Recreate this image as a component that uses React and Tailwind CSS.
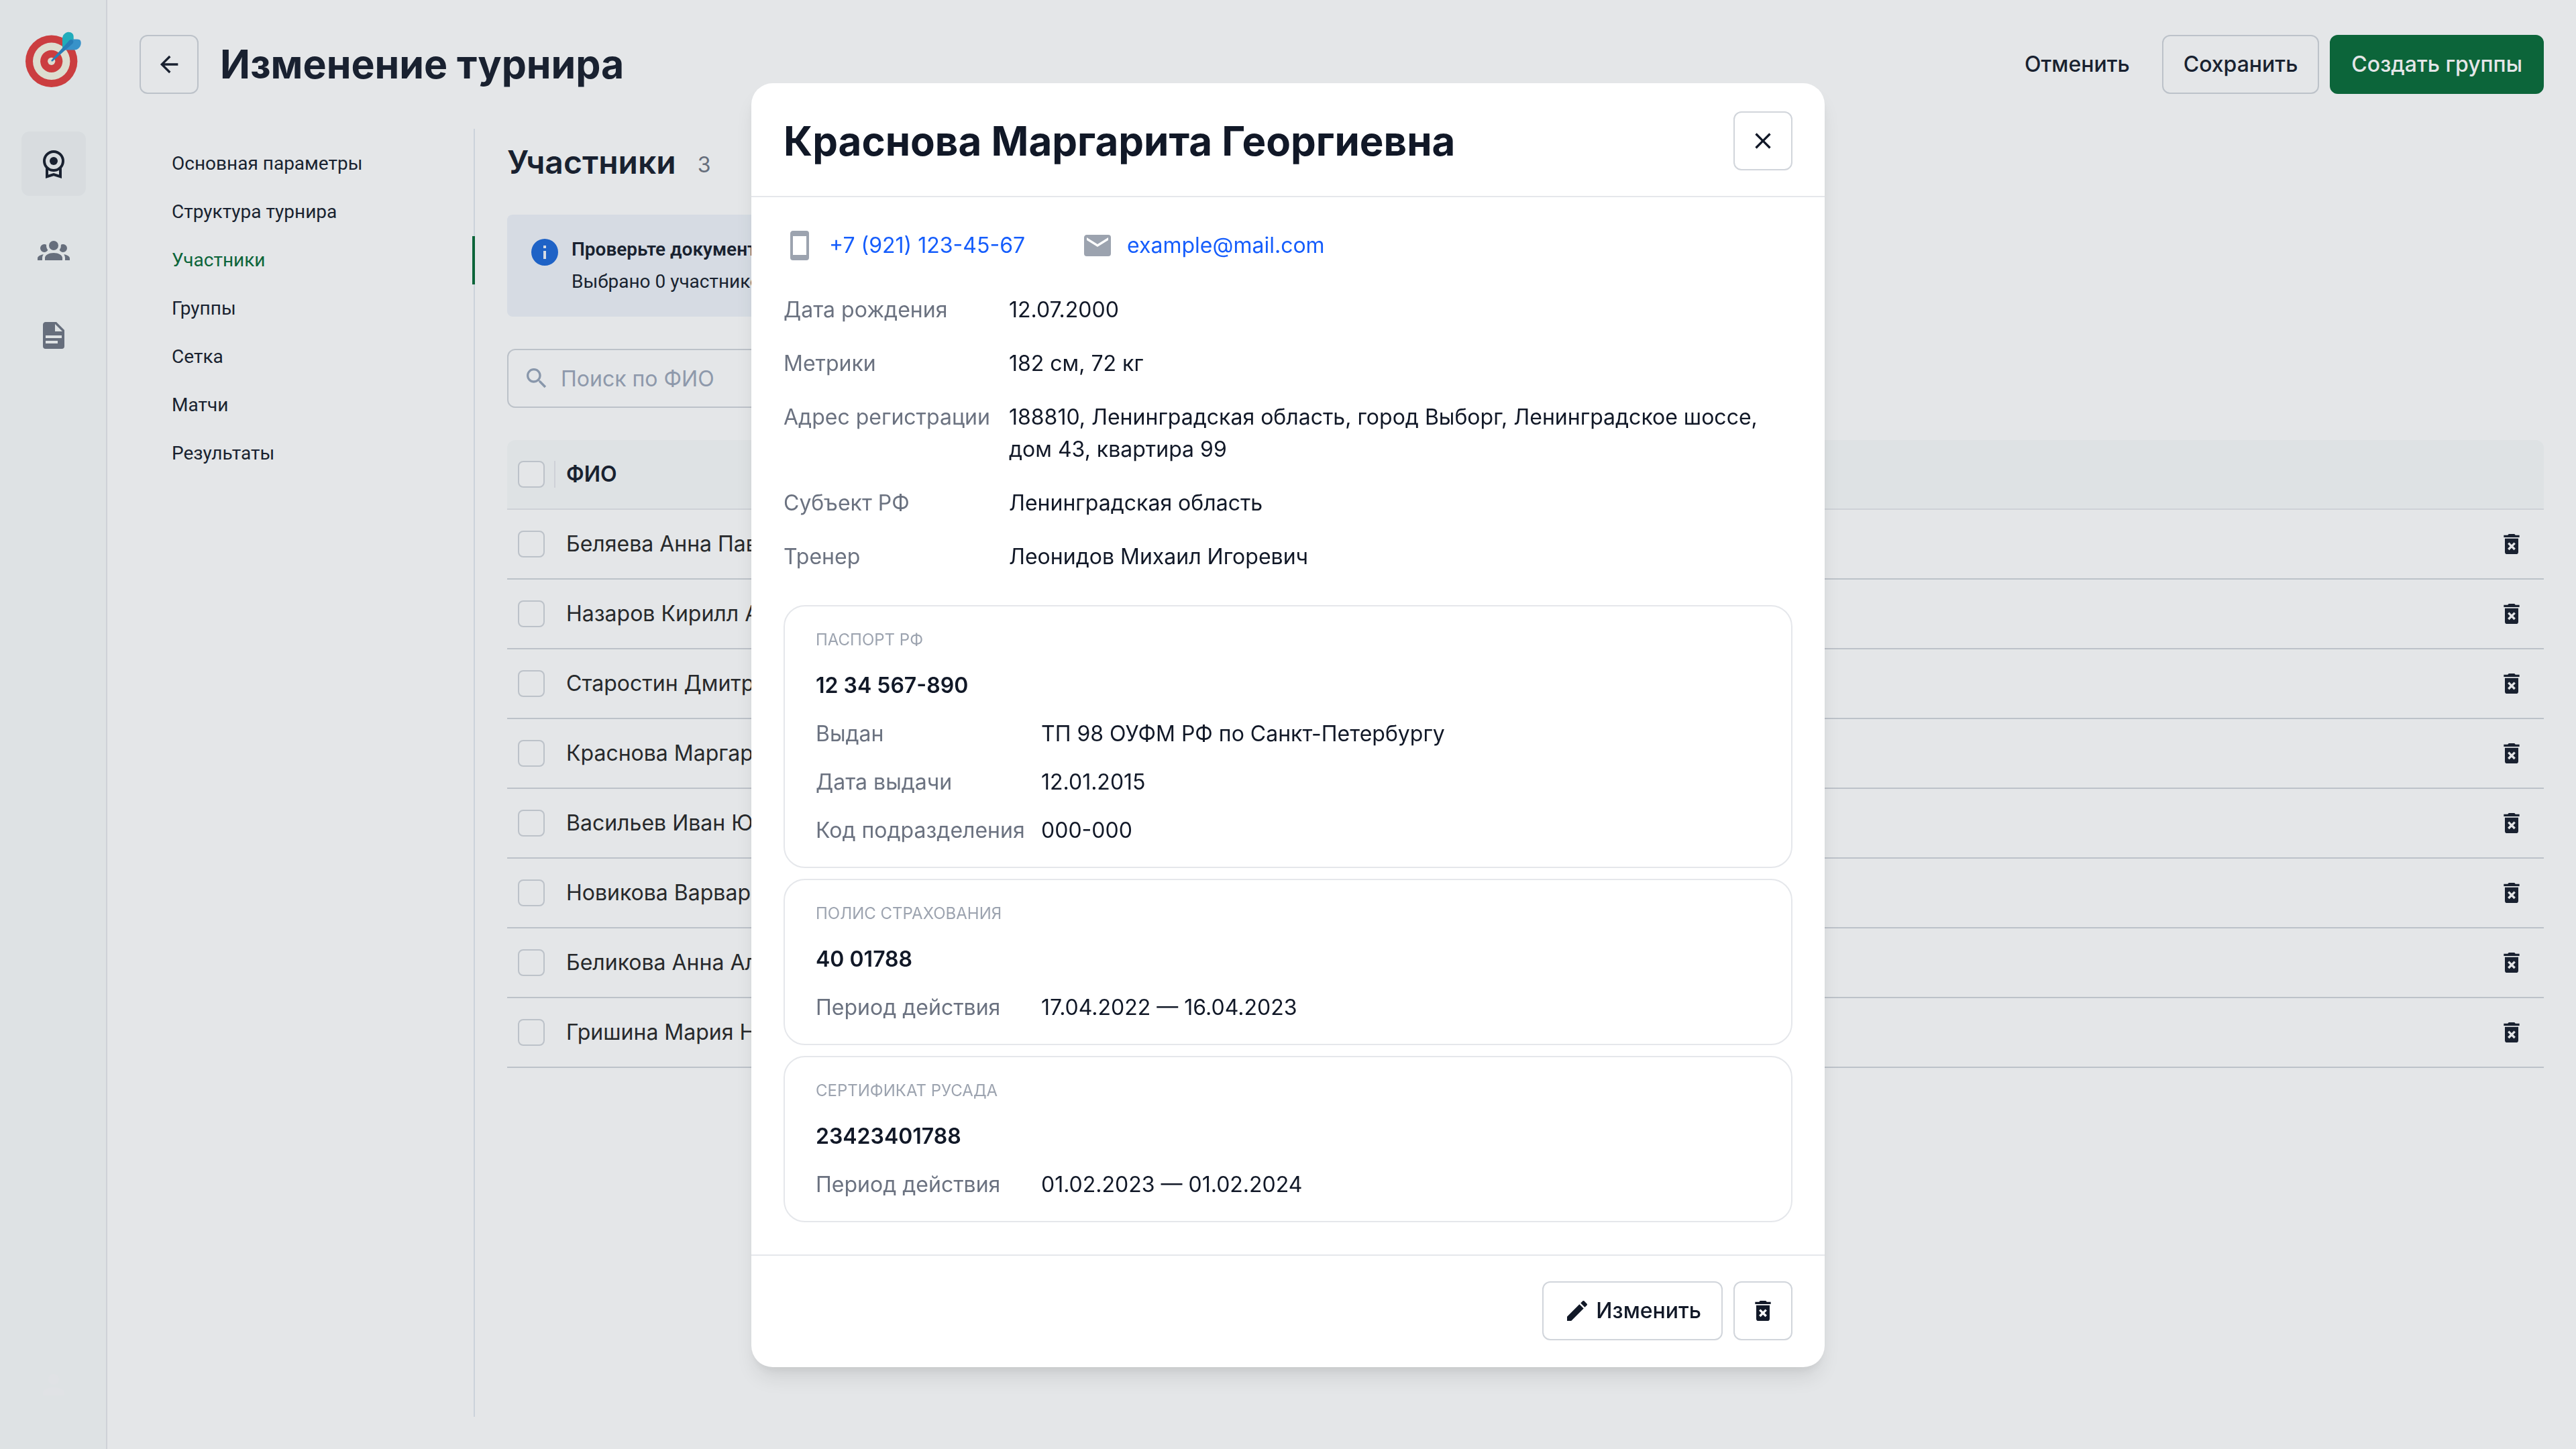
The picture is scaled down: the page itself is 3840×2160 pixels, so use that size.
import React from "react";

const ICONS = {
  group:
    "M12 5.5A3.5 3.5 0 0 1 15.5 9a3.5 3.5 0 0 1-3.5 3.5A3.5 3.5 0 0 1 8.5 9 3.5 3.5 0 0 1 12 5.5M5 8c.56 0 1.08.15 1.53.42-.15 1.43.27 2.85 1.13 3.96C7.16 13.34 6.16 14 5 14a3 3 0 0 1-3-3 3 3 0 0 1 3-3m14 0a3 3 0 0 1 3 3 3 3 0 0 1-3 3c-1.16 0-2.16-.66-2.66-1.62a5.536 5.536 0 0 0 1.13-3.96c.45-.27.97-.42 1.53-.42M5.5 18.25c0-2.07 2.91-3.75 6.5-3.75s6.5 1.68 6.5 3.75V20h-13zM0 20v-1.5c0-1.39 1.89-2.56 4.45-2.9-.59.68-.95 1.62-.95 2.65V20zm24 0h-3.5v-1.75c0-1.03-.36-1.97-.95-2.65 2.56.34 4.45 1.51 4.45 2.9z",
  file: "M13 9h5.5L13 3.5zM6 2h8l6 6v12a2 2 0 0 1-2 2H6a2 2 0 0 1-2-2V4c0-1.11.89-2 2-2m9 16v-2H6v2zm3-4v-2H6v2z",
  account:
    "M12 4a4 4 0 0 1 4 4 4 4 0 0 1-4 4 4 4 0 0 1-4-4 4 4 0 0 1 4-4m0 10c4.42 0 8 1.79 8 4v2H4v-2c0-2.21 3.58-4 8-4",
  back: "M20 11v2H8l5.500 5.500-1.420 1.420L4.160 12l7.920-7.920L13.500 5.500 8 11z",
  close:
    "M19 6.41 17.59 5 12 10.59 6.41 5 5 6.41 10.59 12 5 17.59 6.41 19 12 13.41 17.59 19 19 17.59 13.41 12z",
  info: "M13 9h-2V7h2m0 10h-2v-6h2m-1-9A10 10 0 0 0 2 12a10 10 0 0 0 10 10 10 10 0 0 0 10-10A10 10 0 0 0 12 2",
  search:
    "M9.5 3A6.5 6.5 0 0 1 16 9.5c0 1.61-.59 3.09-1.56 4.23l.27.27h.79l5 5-1.5 1.5-5-5v-.79l-.27-.27A6.516 6.516 0 0 1 9.5 16 6.5 6.5 0 0 1 3 9.5 6.5 6.5 0 0 1 9.5 3m0 2C7 5 5 7 5 9.5S7 14 9.5 14 14 12 14 9.5 12 5 9.5 5",
  trash:
    "M6 19a2 2 0 0 0 2 2h8a2 2 0 0 0 2-2V7H6zm2.46-7.12 1.41-1.41L12 12.59l2.12-2.12 1.41 1.41L13.41 14l2.12 2.12-1.41 1.41L12 15.41l-2.12 2.12-1.41-1.41L10.59 14zM15.5 4l-1-1h-5l-1 1H5v2h14V4z",
  pencil:
    "M20.71 7.04c.39-.39.39-1.04 0-1.41l-2.34-2.34c-.37-.39-1.02-.39-1.41 0l-1.84 1.83 3.75 3.75M3 17.25V21h3.75L17.81 9.93l-3.75-3.75z",
  phone:
    "M17 19H7V5h10m0-4H7c-1.11 0-2 .89-2 2v18a2 2 0 0 0 2 2h10a2 2 0 0 0 2-2V3a2 2 0 0 0-2-2",
  email:
    "m20 8-8 5-8-5V6l8 5 8-5m0-2H4c-1.11 0-2 .89-2 2v12a2 2 0 0 0 2 2h16a2 2 0 0 0 2-2V6a2 2 0 0 0-2-2",
};

function Icon({ name, className = "size-12" }) {
  return (
    <svg viewBox="0 0 24 24" fill="currentColor" aria-hidden="true" className={`shrink-0 ${className}`}>
      <path d={ICONS[name]} />
    </svg>
  );
}

function AwardIcon() {
  return (
    <svg viewBox="0 0 24 24" fill="none" stroke="currentColor" strokeWidth="2" aria-hidden="true" className="size-12 shrink-0">
      <circle cx="12" cy="10" r="7" />
      <circle cx="12" cy="10" r="3" fill="currentColor" stroke="none" />
      <path d="M7 14.5v7.1l5-1.6 5 1.6v-7.1" />
    </svg>
  );
}

function Logo() {
  return (
    <svg viewBox="0 0 96 96" aria-hidden="true" className="size-24 shrink-0">
      <circle cx="44.7" cy="48.3" r="38.7" fill="#e23a3a" />
      <circle cx="44.7" cy="48.3" r="27.7" fill="#f7f6e3" />
      <circle cx="44.7" cy="48.3" r="16.6" fill="#e23a3a" />
      <circle cx="44.7" cy="48.3" r="5.6" fill="#f7f6e3" />
      <path d="M61 29V14c0-4 4-9.300 9-9.300 5 0 7.700 3 7.700 7.300v12L61 32z" fill="#1bbbcb" />
      <path d="M77 15.500h6c5 0 5.700 3 5.700 5.800 0 5.700-4.700 10.300-9.700 10.300H62z" fill="#369ddb" />
      <path d="M71.500 17c1.300-1.300 3.600-1.600 5-.2 1.300 1.300 1.200 3.700-.3 5.200L46.500 48.300c-1.300 1-2.800-.4-1.800-1.700z" fill="#2384c6" />
    </svg>
  );
}

const SECTIONS = ["Основная параметры", "Структура турнира", "Участники", "Группы", "Сетка", "Матчи", "Результаты"];

const PEOPLE = [
  "Беляева Анна Павловна",
  "Назаров Кирилл Андреевич",
  "Старостин Дмитрий Олегович",
  "Краснова Маргарита Георгиевна",
  "Васильев Иван Юрьевич",
  "Новикова Варвара Сергеевна",
  "Беликова Анна Алексеевна",
  "Гришина Мария Николаевна",
];

const DETAILS = [
  ["Дата рождения", "12.07.2000"],
  ["Метрики", "182 см, 72 кг"],
  ["Адрес регистрации", "188810, Ленинградская область, город Выборг, Ленинградское шоссе, дом 43, квартира 99"],
  ["Субъект РФ", "Ленинградская область"],
  ["Тренер", "Леонидов Михаил Игоревич"],
];

const DOCUMENTS = [
  {
    title: "ПАСПОРТ РФ",
    number: "12 34 567-890",
    rows: [
      ["Выдан", "ТП 98 ОУФМ РФ по Санкт-Петербургу"],
      ["Дата выдачи", "12.01.2015"],
      ["Код подразделения", "000-000"],
    ],
  },
  { title: "ПОЛИС СТРАХОВАНИЯ", number: "40 01788", rows: [["Период действия", "17.04.2022 — 16.04.2023"]] },
  { title: "СЕРТИФИКАТ РУСАДА", number: "23423401788", rows: [["Период действия", "01.02.2023 — 01.02.2024"]] },
];

function Button({ className = "border-[#d1d5db]", children, ...rest }) {
  return (
    <button
      type="button"
      className={`flex h-22 shrink-0 items-center justify-center gap-2 rounded-xl border-2 text-[32px] leading-[48px] font-medium ${className}`}
      {...rest}
    >
      {children}
    </button>
  );
}

function Checkbox({ label }) {
  return (
    <input
      type="checkbox"
      aria-label={label}
      className="block size-10 shrink-0 appearance-none rounded-lg border-2 border-[#d1d5db] bg-white"
    />
  );
}

function Field({ label, value }) {
  return (
    <div className="grid grid-cols-[320px_1fr] gap-4">
      <dt className="whitespace-nowrap text-[#6b7280]">{label}</dt>
      <dd>{value}</dd>
    </div>
  );
}

function Sidebar() {
  return (
    <aside className="flex w-40 shrink-0 flex-col items-center border-r-2 border-[#e5e7eb] bg-[#f8fbfb] pt-[43px] pb-12 pl-0.5">
      <a href="#home" aria-label="Главная">
        <Logo />
      </a>
      <nav className="mt-[57px] flex flex-1 flex-col gap-8 text-[#6b7280]">
        <a href="#tournaments" aria-label="Турниры" className="flex size-24 items-center justify-center rounded-xl bg-[#f1f4f5] text-[#111827]">
          <AwardIcon />
        </a>
        <a href="#people" aria-label="Участники" className="flex size-24 items-center justify-center">
          <Icon name="group" />
        </a>
        <a href="#documents" aria-label="Документы" className="flex size-24 items-center justify-center">
          <Icon name="file" />
        </a>
        <a href="#profile" aria-label="Профиль" className="mt-auto flex size-24 items-center justify-center text-[#fbfbfc]">
          <Icon name="account" />
        </a>
      </nav>
    </aside>
  );
}

function Participants() {
  return (
    <section className="min-w-0 flex-1 pl-12">
      <div className="flex h-32 items-center gap-8 pb-7">
        <h2 className="text-[48px] leading-[64px] font-semibold">Участники</h2>
        <span className="pt-2 text-[32px] leading-[48px] text-[#6b7280]">3</span>
      </div>
      <div className="flex w-[1200px] max-w-full gap-4 rounded-lg bg-[#eff3fa] p-8">
        <Icon name="info" className="size-12 text-[#1764d8]" />
        <div className="flex flex-col gap-2 font-['Roboto',sans-serif] text-[28px] leading-[40px]">
          <p className="font-semibold">Проверьте документы участников</p>
          <p>Выбрано 0 участников</p>
        </div>
      </div>
      <label className="relative mt-12 block w-[900px] text-[#94a3b8]">
        <span className="absolute top-6 left-6">
          <Icon name="search" className="size-10" />
        </span>
        <input
          type="search"
          aria-label="Поиск по ФИО"
          placeholder="Поиск по ФИО"
          className="block h-22 w-full rounded-xl border-2 border-[#d1d5db] bg-white pr-8 pl-[78px] text-[32px] text-[#111827] placeholder:text-[#9aa5b8]"
        />
      </label>
      <table className="mt-12 w-full border-separate border-spacing-0 text-left text-[32px] leading-[48px]">
        <thead>
          <tr>
            <th className="w-[72px] rounded-tl-xl border-b-2 border-[#e5e7eb] bg-[#f8fbfb] p-0">
              <div className="flex h-[102px] items-center justify-between pl-4">
                <Checkbox label="Выбрать всех" />
                <span className="h-10 w-0.5 bg-[#e5e7eb]" />
              </div>
            </th>
            <th className="border-b-2 border-[#e5e7eb] bg-[#f8fbfb] px-4 py-0 font-semibold">ФИО</th>
            <th className="w-24 rounded-tr-xl border-b-2 border-[#e5e7eb] bg-[#f8fbfb] p-0" aria-label="Действия" />
          </tr>
        </thead>
        <tbody className="text-[#222222]">
          {PEOPLE.map((name) => (
            <tr key={name}>
              <td className="border-b-2 border-[#d1d5db] p-0">
                <div className="flex h-[102px] items-center pl-4">
                  <Checkbox label={name} />
                </div>
              </td>
              <td className="border-b-2 border-[#d1d5db] px-4 py-0">{name}</td>
              <td className="border-b-2 border-[#d1d5db] p-0">
                <button type="button" aria-label={`Удалить: ${name}`} className="ml-auto mr-7 block text-[#111827]">
                  <Icon name="trash" className="size-10" />
                </button>
              </td>
            </tr>
          ))}
        </tbody>
      </table>
    </section>
  );
}

function PersonDialog() {
  return (
    <div
      role="dialog"
      aria-modal="true"
      aria-labelledby="person-name"
      className="w-[1600px] max-w-full rounded-[32px] bg-white text-[32px] leading-[48px] shadow-[0_20px_30px_-6px_rgba(0,0,0,0.1),0_8px_12px_-4px_rgba(0,0,0,0.05)]"
    >
      <header className="flex items-center justify-between border-b-2 border-[#e5e7eb] px-12 pt-[42px] pb-[38px]">
        <h2 id="person-name" className="text-[60px] leading-[72px] font-bold">
          Краснова Маргарита Георгиевна
        </h2>
        <Button className="w-22 border-[#d1d5db]" aria-label="Закрыть">
          <Icon name="close" className="size-10" />
        </Button>
      </header>
      <div className="flex flex-col gap-12 p-12">
        <div className="flex gap-[84px] text-[#155dfc]">
          <a href="tel:+79211234567" className="flex items-center gap-5">
            <Icon name="phone" className="size-12 text-[#9ca3af]" />
            +7 (921) 123-45-67
          </a>
          <a href="mailto:example@mail.com" className="flex items-center gap-5">
            <Icon name="email" className="size-12 text-[#9ca3af]" />
            example@mail.com
          </a>
        </div>
        <dl className="flex flex-col gap-8">
          {DETAILS.map(([label, value]) => (
            <Field key={label} label={label} value={value} />
          ))}
        </dl>
        <div className="flex flex-col gap-4">
          {DOCUMENTS.map((doc) => (
            <section key={doc.title} className="flex flex-col gap-6 rounded-[32px] border-2 border-[#e5e7eb] px-[46px] py-[30px]">
              <h3 className="text-[24px] leading-[40px] text-[#9ca3af]">{doc.title}</h3>
              <p className="font-semibold">{doc.number}</p>
              <dl className="flex flex-col gap-6">
                {doc.rows.map(([label, value]) => (
                  <Field key={label} label={label} value={value} />
                ))}
              </dl>
            </section>
          ))}
        </div>
      </div>
      <footer className="flex justify-end gap-4 border-t-2 border-[#e5e7eb] px-12 pt-[38px] pb-10">
        <Button className="border-[#d1d5db] px-[30px]">
          <Icon name="pencil" className="size-10" />
          Изменить
        </Button>
        <Button className="w-22 border-[#d1d5db]" aria-label="Удалить">
          <Icon name="trash" className="size-10" />
        </Button>
      </footer>
    </div>
  );
}

export default function App() {
  return (
    <div className="font-['Inter',sans-serif] text-[#111827]">
      <div className="flex min-h-screen bg-white">
        <Sidebar />
        <main className="flex min-w-0 flex-1 flex-col px-12 pb-12">
          <header className="flex h-48 items-center justify-between">
            <div className="flex items-center gap-8">
              <Button className="w-22 border-[#d1d5db]" aria-label="Назад">
                <Icon name="back" className="size-10" />
              </Button>
              <h1 className="text-[59px] leading-[72px] font-bold">Изменение турнира</h1>
            </div>
            <div className="flex gap-4">
              <Button className="border-transparent px-[30px]">Отменить</Button>
              <Button className="border-[#d1d5db] px-[30px]">Сохранить</Button>
              <Button className="border-[#026833] bg-[#026833] px-[30px] text-white">Создать группы</Button>
            </div>
          </header>
          <div className="flex flex-1">
            <nav className="w-[500px] shrink-0 border-r-2 border-[#e2e8f0] pt-4 font-['Roboto',sans-serif] text-[28px] leading-[72px]">
              {SECTIONS.map((name) =>
                name === "Участники" ? (
                  <a key={name} href="#section" aria-current="page" className="-mr-0.5 block border-r-4 border-[#026833] pl-12 text-[#026833]">
                    {name}
                  </a>
                ) : (
                  <a key={name} href="#section" className="block pl-12">
                    {name}
                  </a>
                )
              )}
            </nav>
            <Participants />
          </div>
        </main>
      </div>
      <div className="fixed inset-0 flex items-center justify-center overflow-auto bg-[#4b5563]/15 pt-0.5">
        <PersonDialog />
      </div>
    </div>
  );
}
